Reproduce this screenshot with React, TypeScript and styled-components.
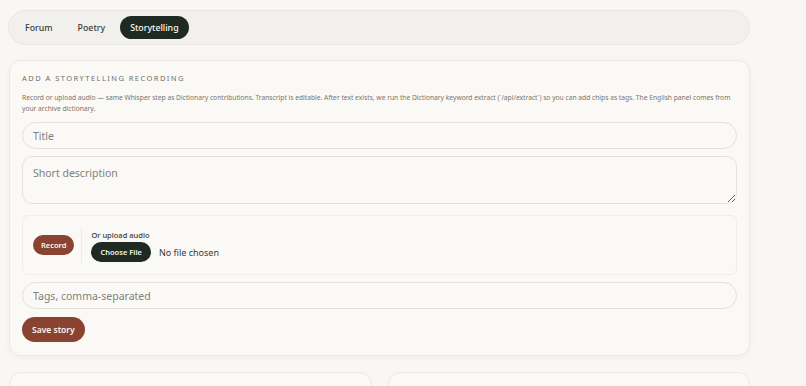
import React from "react";
import styled, { createGlobalStyle } from "styled-components";

const Global = createGlobalStyle`
  html, body { margin: 0; padding: 0; background: #f8f7f3; }
  body { font-family: "Noto Sans", "Open Sans", sans-serif; color: #2a2a26; }
  * { box-sizing: border-box; }
`;

const Page = styled.div`
  padding: 10px 0 0 8px;
  width: 750px;
  display: flex;
  flex-direction: column;
  gap: 15px;
`;

const TabBar = styled.nav`
  height: 35px;
  border-radius: 18px;
  background: #f1f0ec;
  border: 1px solid #e8e7e2;
  display: flex;
  align-items: center;
  gap: 5px;
  padding: 0 6px;
`;

const Tab = styled.button<{ $active?: boolean }>`
  border: none;
  font-family: inherit;
  font-size: 8.8px;
  font-weight: 500;
  height: 23px;
  padding: 0 10px;
  border-radius: 12px;
  cursor: pointer;
  background: ${(p) => (p.$active ? "#1f2b22" : "transparent")};
  color: ${(p) => (p.$active ? "#fafaf6" : "#3d3d38")};
`;

const Card = styled.section`
  margin-left: 1px;
  background: #faf9f6;
  border: 1px solid #ebeae5;
  border-radius: 12px;
  box-shadow: 0 2px 6px rgba(0, 0, 0, 0.04);
  padding: 11px 12px 13px 12px;
  display: flex;
  flex-direction: column;
  gap: 7px;
`;

const Heading = styled.h2`
  margin: 0;
  font-size: 7.5px;
  font-weight: 400;
  letter-spacing: 1.45px;
  text-transform: uppercase;
  color: #6f6e68;
  line-height: 12px;
`;

const Desc = styled.p`
  margin: 1px 0 1px;
  font-size: 6.7px;
  line-height: 11px;
  color: #77766f;
`;

const PillInput = styled.input`
  height: 27px;
  border-radius: 14px;
  border: 1px solid #e3e2dd;
  background: #faf9f6;
  padding: 0 10px;
  font-family: inherit;
  font-size: 10.5px;
  color: #2a2a26;
  outline: none;
  &::placeholder { color: #818079; }
`;

const TextArea = styled.textarea`
  height: 48px;
  border-radius: 10px;
  border: 1px solid #e3e2dd;
  background: #faf9f6;
  padding: 9px 10px;
  font-family: inherit;
  font-size: 10.5px;
  resize: vertical;
  outline: none;
  &::placeholder { color: #818079; }
`;

const AudioBox = styled.div`
  margin-top: 4px;
  height: 60px;
  border: 1px solid #efeee9;
  border-radius: 6px;
  display: flex;
  align-items: center;
  padding: 0 10px;
`;

const RecordButton = styled.button`
  border: none;
  background: #8a4330;
  color: #fbf5f0;
  font-family: inherit;
  font-size: 7.5px;
  font-weight: 600;
  height: 20px;
  padding: 0 8px;
  border-radius: 10px;
`;

const Divider = styled.div`
  width: 1px;
  align-self: stretch;
  margin: 11px 9px 11px 7px;
  background: #ecebe6;
`;

const UploadCol = styled.div`
  display: flex;
  flex-direction: column;
  gap: 2px;
  padding-top: 2px;
`;

const UploadLabel = styled.span`
  font-size: 7.5px;
  font-weight: 500;
  color: #3c3b36;
`;

const FileRow = styled.div`
  display: flex;
  align-items: center;
  gap: 8px;
`;

const ChooseButton = styled.button`
  border: none;
  background: #1f2b22;
  color: #f4f4ef;
  font-family: inherit;
  font-size: 7.5px;
  font-weight: 600;
  height: 20px;
  padding: 0 9px;
  border-radius: 10px;
`;

const FileName = styled.span`
  font-size: 9px;
  color: #3a3934;
`;

const SaveButton = styled.button`
  align-self: flex-start;
  margin-top: 1px;
  border: none;
  background: #8a4330;
  color: #fbf5f0;
  font-family: inherit;
  font-size: 8.5px;
  font-weight: 600;
  height: 25px;
  padding: 0 10px;
  border-radius: 13px;
`;

const Row = styled.div`
  display: grid;
  grid-template-columns: 1fr 1fr;
  gap: 16px;
  margin-left: 1px;
  margin-top: 1px;
`;

const SmallCard = styled.div`
  height: 40px;
  background: #faf9f6;
  border: 1px solid #ebeae5;
  border-radius: 12px;
`;

export default function App() {
  return (
    <>
      <Global />
      <Page>
        <TabBar>
          <Tab>Forum</Tab>
          <Tab>Poetry</Tab>
          <Tab $active>Storytelling</Tab>
        </TabBar>
        <Card>
          <Heading>Add a storytelling recording</Heading>
          <Desc>
            Record or upload audio — same Whisper step as Dictionary contributions. Transcript is editable. After text
            exists, we run the Dictionary keyword extract (`/api/extract`) so you can add chips as tags. The English
            panel comes from your archive dictionary.
          </Desc>
          <PillInput placeholder="Title" />
          <TextArea placeholder="Short description" />
          <AudioBox>
            <RecordButton>Record</RecordButton>
            <Divider />
            <UploadCol>
              <UploadLabel>Or upload audio</UploadLabel>
              <FileRow>
                <ChooseButton>Choose File</ChooseButton>
                <FileName>No file chosen</FileName>
              </FileRow>
            </UploadCol>
          </AudioBox>
          <PillInput placeholder="Tags, comma-separated" />
          <SaveButton>Save story</SaveButton>
        </Card>
        <Row>
          <SmallCard />
          <SmallCard />
        </Row>
      </Page>
    </>
  );
}
